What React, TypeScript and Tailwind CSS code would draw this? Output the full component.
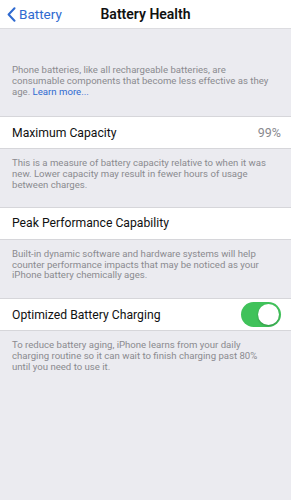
import React from 'react'

const font = { fontFamily: 'Roboto, "Noto Sans", sans-serif' }

function Note({ children, className = '' }: { children: React.ReactNode; className?: string }) {
  return (
    <p className={`px-3 text-[9.6px] leading-[10.8px] text-[#8a8a8f] ${className}`}>{children}</p>
  )
}

function Row({ label, right }: { label: string; right?: React.ReactNode }) {
  return (
    <div className="flex h-[33px] items-center justify-between border-y border-[#d6d6da] bg-white pl-3 pr-[10px]">
      <span className="text-[12.2px] text-[#111]">{label}</span>
      {right}
    </div>
  )
}

function Toggle() {
  return (
    <div className="flex h-[25px] w-[40px] items-center justify-end rounded-full bg-[#40c25a] p-[2px]">
      <div className="h-[21px] w-[21px] rounded-full bg-white shadow-[0_1px_2px_rgba(0,0,0,0.25)]" />
    </div>
  )
}

export default function App() {
  return (
    <div className="flex min-h-[500px] w-[291px] flex-col bg-[#ebebf0]" style={font}>
      <header className="relative flex h-[29px] items-center justify-center border-b border-[#dcdce0] bg-white">
        <button className="absolute left-[7px] top-0 flex h-full items-center gap-[3px] text-[#2f6ad0]">
          <svg width="9" height="15" viewBox="0 0 9 15" fill="none">
            <path d="M7.5 1.2L1.6 7.5l5.9 6.3" stroke="currentColor" strokeWidth="2" strokeLinecap="round" strokeLinejoin="round" />
          </svg>
          <span className="text-[13.5px]">Battery</span>
        </button>
        <h1 className="text-[14px] font-semibold text-[#111]">Battery Health</h1>
      </header>

      <Note className="pb-[19px] pt-[36px]">
        Phone batteries, like all rechargeable batteries, are consumable components that become less effective as they
        age. <span className="text-[#2f6ad0]">Learn more...</span>
      </Note>

      <Row label="Maximum Capacity" right={<span className="text-[12.5px] text-[#8a8a8f]">99%</span>} />
      <Note className="pb-[16px] pt-[9px]">
        This is a measure of battery capacity relative to when it was new. Lower capacity may result in fewer hours of
        usage between charges.
      </Note>

      <Row label="Peak Performance Capability" />
      <Note className="pb-[17px] pt-[9px]">
        Built-in dynamic software and hardware systems will help counter performance impacts that may be noticed as
        your iPhone battery chemically ages.
      </Note>

      <Row label="Optimized Battery Charging" right={<Toggle />} />
      <Note className="pt-[9px]">
        To reduce battery aging, iPhone learns from your daily charging routine so it can wait to finish charging past
        80%
        <br />
        until you need to use it.
      </Note>
    </div>
  )
}
